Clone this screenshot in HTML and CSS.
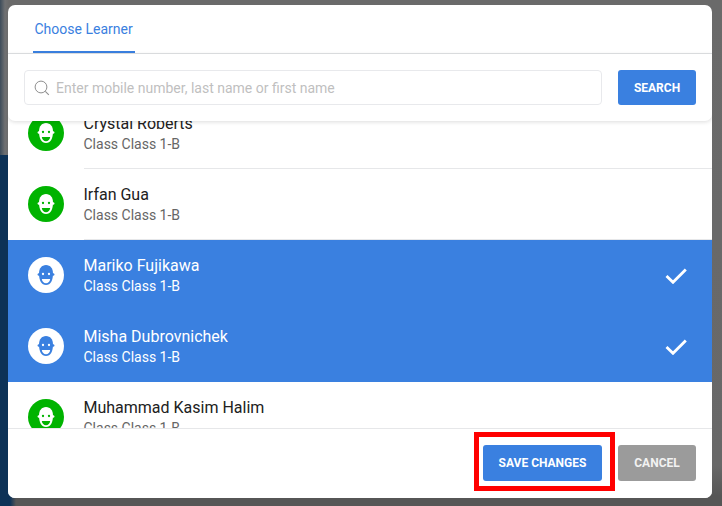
FILE: index.html
```html
<!DOCTYPE html>
<html lang="en">
<head>
<meta charset="utf-8">
<title>Choose Learner</title>
<link rel="stylesheet" href="styles.css">
</head>
<body>
<svg class="defs" width="0" height="0" aria-hidden="true">
  <symbol id="face" viewBox="0 0 36 36">
    <circle cx="10.9" cy="17.500" r="1.300" fill="currentColor"/>
    <circle cx="25.1" cy="17.500" r="1.300" fill="currentColor"/>
    <path d="M18 8C22.400 8 25 11.500 25 16.500C25 23.500 22.500 28 18 28C13.500 28 11 23.500 11 16.500C11 11.500 13.600 8 18 8z" fill="currentColor"/>
    <circle cx="15" cy="17" r="1.150" class="face-detail"/>
    <circle cx="21" cy="17" r="1.150" class="face-detail"/>
    <path d="M13.800 22h8.400c-.3 2.600-2 4.200-4.200 4.200s-3.900-1.600-4.200-4.200z" class="face-detail"/>
  </symbol>
</svg>
<main class="modal">
  <header class="tabs">
    <div class="tab">Choose Learner</div>
  </header>
  <section class="search">
    <div class="search-field">
      <svg class="search-icon" viewBox="0 0 16 16" width="16" height="16" aria-hidden="true">
        <circle cx="7" cy="7" r="5.900" fill="none" stroke="#8f8f8f" stroke-width="1"/>
        <path d="M11.300 11.300l3.500 3.500" fill="none" stroke="#8f8f8f" stroke-width="1.100"/>
      </svg>
      <span class="placeholder">Enter mobile number, last name or first name</span>
    </div>
    <button class="btn btn-primary btn-search">Search</button>
  </section>
  <div class="list">
    <ul class="rows">
      <li class="row">
        <span class="avatar"><svg width="36" height="36"><use href="#face"/></svg></span>
        <div class="row-text"><div class="name">Crystal Roberts</div><div class="sub">Class Class 1-B</div></div>
      </li>
      <li class="row">
        <span class="avatar"><svg width="36" height="36"><use href="#face"/></svg></span>
        <div class="row-text"><div class="name">Irfan Gua</div><div class="sub">Class Class 1-B</div></div>
      </li>
      <li class="row selected">
        <span class="avatar"><svg width="36" height="36"><use href="#face"/></svg></span>
        <div class="row-text"><div class="name">Mariko Fujikawa</div><div class="sub">Class Class 1-B</div></div>
        <svg class="check" viewBox="0 0 22 16" width="22" height="16"><path d="M1.500 8l6.500 6.300L20.800 1.500"/></svg>
      </li>
      <li class="row selected">
        <span class="avatar"><svg width="36" height="36"><use href="#face"/></svg></span>
        <div class="row-text"><div class="name">Misha Dubrovnichek</div><div class="sub">Class Class 1-B</div></div>
        <svg class="check" viewBox="0 0 22 16" width="22" height="16"><path d="M1.500 8l6.500 6.300L20.800 1.500"/></svg>
      </li>
      <li class="row">
        <span class="avatar"><svg width="36" height="36"><use href="#face"/></svg></span>
        <div class="row-text"><div class="name">Muhammad Kasim Halim</div><div class="sub">Class Class 1-B</div></div>
      </li>
    </ul>
  </div>
  <footer class="footer">
    <span class="highlight"><button class="btn btn-primary btn-save">Save Changes</button></span>
    <button class="btn btn-muted btn-cancel">Cancel</button>
  </footer>
</main>
</body>
</html>
```
FILE: styles.css
```css
* { box-sizing: border-box; }
html, body { margin: 0; height: 100%; }
body {
  width: 722px;
  height: 506px;
  overflow: hidden;
  padding: 5px 10px 8px 8px;
  font-family: Roboto, "Liberation Sans", sans-serif;
  background:
    linear-gradient(90deg, #0d3257 0, #0d3257 10px, rgba(13, 50, 87, 0) 16px) 0 155px / 100% 100% no-repeat,
    linear-gradient(90deg, #3d4c5a 0, #6f7072 5px, #6a6a6a 9px, rgba(106, 106, 106, 0) 12px) 0 0 / 100% 155px no-repeat,
    linear-gradient(180deg, #6a6a6a 0, #686868 92%, #565656 98%, #565656 100%);
}
.defs { position: absolute; }
.modal {
  width: 704px;
  height: 493px;
  background: #fff;
  border-radius: 7px;
  overflow: hidden;
  display: flex;
  flex-direction: column;
}
.tabs {
  flex: none;
  height: 49px;
  padding-left: 25px;
  border-bottom: 1px solid #e1e3e6;
  display: flex;
}
.tab {
  width: 102px;
  height: 48px;
  padding: 16px 0 0 1.500px;
  font-size: 14px;
  line-height: 17px;
  color: #3a80e0;
  border-bottom: 2px solid #3a80e0;
}
.search {
  flex: none;
  height: 67px;
  padding: 16px;
  display: flex;
  gap: 16px;
  background: #fff;
  border-radius: 0 0 7px 7px;
  box-shadow: 0 1px 4px rgba(0, 0, 0, 0.14);
  z-index: 2;
}
.search-field {
  flex: 1;
  height: 35px;
  padding-left: 9px;
  display: flex;
  align-items: center;
  gap: 6px;
  border: 1px solid #e8e9ec;
  border-radius: 4px;
}
.search-icon { flex: none; }
.placeholder {
  font-size: 14px;
  color: #bfbfbf;
}
.btn {
  border: 0;
  border-radius: 3px;
  font-family: inherit;
  font-size: 12px;
  font-weight: 700;
  color: #fff;
  text-transform: uppercase;
  padding: 0;
}
.btn-primary { background: #3a80e0; }
.btn-muted { background: #9b9b9b; color: #f2f2f2; }
.btn-search { flex: none; width: 78px; height: 35px; }
.list {
  flex: 1;
  min-height: 0;
  overflow: hidden;
}
.rows {
  list-style: none;
  margin: -23px 0 0;
  padding: 0;
}
.row {
  --face-detail: #00b300;
  height: 71px;
  padding-left: 20px;
  display: flex;
  align-items: center;
  position: relative;
}
.row::after {
  content: "";
  position: absolute;
  left: 76px;
  right: 0;
  bottom: 0;
  height: 1px;
  background: #e6e7e9;
}
.row.selected {
  --face-detail: #fff;
  background: #3a80e0;
  color: #fff;
}
.row.selected::after { display: none; }
.avatar {
  flex: none;
  width: 36px;
  height: 36px;
  margin-bottom: 1px;
  border-radius: 50%;
  background: #00b300;
  color: #fff;
  display: block;
}
.avatar svg { display: block; }
.selected .avatar { background: #fff; color: #3a80e0; }
.face-detail { fill: var(--face-detail); }
.row-text {
  margin-left: 19.500px;
  flex: 1;
}
.name {
  font-size: 16px;
  line-height: 21px;
  color: #212121;
}
.sub {
  font-size: 14px;
  line-height: 21px;
  color: #666;
}
.selected .name, .selected .sub { color: #fff; }
.check {
  flex: none;
  margin-right: 25px;
  fill: none;
  stroke: #fff;
  stroke-width: 2.800;
}
.footer {
  flex: none;
  height: 70px;
  padding: 16px 16px 0 0;
  display: flex;
  justify-content: flex-end;
  gap: 16px;
  background: #fff;
  border-top: 1px solid #e6e7e9;
  z-index: 2;
}
.highlight {
  position: relative;
  display: block;
  height: 36px;
}
.highlight::after {
  content: "";
  position: absolute;
  left: -9px;
  right: -13px;
  top: -13px;
  bottom: -10px;
  border: 5px solid #f00;
  pointer-events: none;
}
.btn-save { display: block; width: 119px; height: 36px; }
.btn-cancel { width: 78px; height: 36px; }
```
